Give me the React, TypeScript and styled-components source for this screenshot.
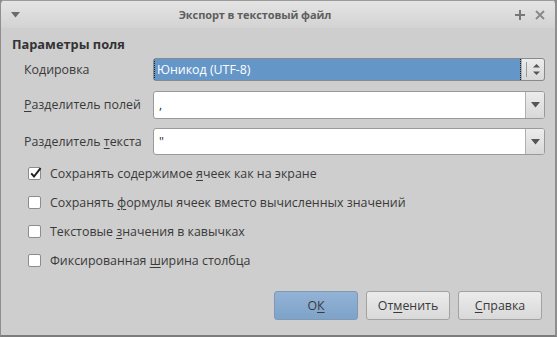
import React from 'react';
import styled, { createGlobalStyle, css } from 'styled-components';

const GlobalStyle = createGlobalStyle`
  html, body {
    margin: 0;
    padding: 0;
    background: #8c8c8c;
  }
  body {
    font-family: "Open Sans", "Noto Sans", sans-serif;
    font-size: 12.4px;
    color: #3a3a3a;
  }
`;

const Window = styled.div`
  width: 557px;
  height: 337px;
  box-sizing: border-box;
  border-left: 1px solid #8e8e8e;
  border-right: 2px solid #8e8e8e;
  border-bottom: 2px solid #7c7c7c;
  border-radius: 5px 5px 0 0;
  background: #cecece;
  display: flex;
  flex-direction: column;
  overflow: hidden;
`;

const TitleBar = styled.div`
  height: 28px;
  flex: none;
  display: grid;
  grid-template-columns: 28px 1fr 40px;
  align-items: center;
  background: linear-gradient(#e4e4e4, #d3d3d3);
  border-top: 1px solid #9a9a9a;
  box-sizing: border-box;
`;

const Title = styled.div`
  font-weight: 700;
  font-size: 11px;
  letter-spacing: -0.1px;
  color: #5e5e5e;
  text-align: center;
  padding-right: 34px;
`;

const TitleIcons = styled.div`
  display: flex;
  gap: 10px;
  align-items: center;
  justify-content: flex-start;
`;

const IconBox = styled.span`
  display: flex;
  align-items: center;
  justify-content: center;
`;

const Body = styled.div`
  flex: 1;
  display: flex;
  flex-direction: column;
  padding: 7px 13px 0 11px;
`;

const SectionTitle = styled.div`
  font-weight: 700;
  font-size: 12.8px;
  line-height: 18px;
  color: #333;
`;

const Form = styled.div`
  display: grid;
  grid-template-columns: 129px 392px;
  grid-template-rows: 23px 28px 27px;
  row-gap: 9.5px;
  margin: 5px 0 0 12px;
  align-items: center;
`;

const Label = styled.div`
  font-size: 12.4px;
  color: #3a3a3a;
`;

const Mn = styled.span`
  text-decoration: underline;
  text-underline-offset: 2px;
`;

const Field = styled.div<{ $selected?: boolean }>`
  height: 100%;
  box-sizing: border-box;
  border: 1px solid #9a9a9a;
  border-radius: 3px;
  background: #fff;
  display: flex;
  overflow: hidden;
  ${({ $selected }) =>
    $selected &&
    css`
      background: #6596c8;
      border-color: #8a8a8a;
    `}
`;

const FieldText = styled.div<{ $selected?: boolean }>`
  flex: 1;
  display: flex;
  align-items: center;
  padding-left: 5px;
  font-size: 12.4px;
  color: #333;
  ${({ $selected }) =>
    $selected &&
    css`
      color: #fff;
      padding-left: 2px;
      border-left: 1px dotted #222;
      border-right: 1px dotted #222;
    `}
`;

const SideButton = styled.div<{ $w: number }>`
  width: ${({ $w }) => $w}px;
  flex: none;
  display: flex;
  align-items: center;
  justify-content: center;
  background: linear-gradient(#ececec, #d8d8d8);
  border-left: 1px solid #b0b0b0;
  box-sizing: border-box;
`;

const Spin = styled.div`
  display: flex;
  align-items: center;
  gap: 6px;
  height: 100%;
`;

const SpinSep = styled.div`
  width: 1px;
  height: 15px;
  background: #9a9a9a;
`;

const Checks = styled.div`
  display: flex;
  flex-direction: column;
  gap: 10px;
  margin: 9px 0 0 16px;
`;

const CheckRow = styled.div`
  display: flex;
  align-items: center;
  gap: 9px;
  height: 19px;
`;

const Box = styled.div`
  width: 13px;
  height: 13px;
  box-sizing: border-box;
  border: 1px solid #8c8c8c;
  border-radius: 2px;
  background: #fff;
  position: relative;
`;

const Tick = styled.svg`
  position: absolute;
  left: 0px;
  top: -2px;
`;

const Buttons = styled.div`
  display: flex;
  justify-content: flex-end;
  gap: 8px;
  margin-top: 21px;
`;

const Button = styled.div<{ $primary?: boolean }>`
  width: 84px;
  height: 29px;
  box-sizing: border-box;
  border: 1px solid #a2a2a2;
  border-radius: 3px;
  display: flex;
  align-items: center;
  justify-content: center;
  font-size: 12.4px;
  color: #3a3a3a;
  background: linear-gradient(#ebebeb, #d9d9d9);
  ${({ $primary }) =>
    $primary &&
    css`
      border-color: #7f98b4;
      background: linear-gradient(#93b3d6, #7ea2c8);
    `}
`;

const Down = ({ color = '#555' }: { color?: string }) => (
  <svg width="9" height="6" viewBox="0 0 9 6">
    <path d="M0 0h9L4.5 5.5z" fill={color} />
  </svg>
);

const Check = ({ checked, children }: { checked?: boolean; children: React.ReactNode }) => (
  <CheckRow>
    <Box>
      {checked && (
        <Tick width="14" height="14" viewBox="0 0 14 14">
          <path d="M2.2 7.4l2.8 3.1L11.6 2.2" fill="none" stroke="#222" strokeWidth="2" />
        </Tick>
      )}
    </Box>
    <Label>{children}</Label>
  </CheckRow>
);

export default function App() {
  return (
    <>
      <GlobalStyle />
      <Window>
        <TitleBar>
          <IconBox>
            <Down color="#6a6a6a" />
          </IconBox>
          <Title>Экспорт в текстовый файл</Title>
          <TitleIcons>
            <svg width="10" height="10" viewBox="0 0 10 10">
              <path d="M5 0v10M0 5h10" stroke="#777" strokeWidth="2" />
            </svg>
            <svg width="10" height="10" viewBox="0 0 10 10">
              <path d="M1 1l8 8M9 1l-8 8" stroke="#888" strokeWidth="1.8" />
            </svg>
          </TitleIcons>
        </TitleBar>
        <Body>
          <SectionTitle>Параметры поля</SectionTitle>
          <Form>
            <Label>Кодировка</Label>
            <Field $selected>
              <FieldText $selected>Юникод (UTF-8)</FieldText>
              <SideButton $w={23}>
                <Spin>
                  <SpinSep />
                  <svg width="7" height="13" viewBox="0 0 7 13">
                    <path d="M0 4.5h7L3.5 1z M0 8.5h7L3.5 12z" fill="#555" />
                  </svg>
                </Spin>
              </SideButton>
            </Field>
            <Label>
              <Mn>Р</Mn>азделитель полей
            </Label>
            <Field>
              <FieldText>,</FieldText>
              <SideButton $w={19}>
                <Down />
              </SideButton>
            </Field>
            <Label>
              Разделитель <Mn>т</Mn>екста
            </Label>
            <Field>
              <FieldText>"</FieldText>
              <SideButton $w={19}>
                <Down />
              </SideButton>
            </Field>
          </Form>
          <Checks>
            <Check checked>
              Сохранять содержимое <Mn>я</Mn>чеек как на экране
            </Check>
            <Check>
              Сохранять <Mn>ф</Mn>ормулы ячеек вместо вычисленных значений
            </Check>
            <Check>
              Текстовые <Mn>з</Mn>начения в кавычках
            </Check>
            <Check>
              Фиксированная <Mn>ш</Mn>ирина столбца
            </Check>
          </Checks>
          <Buttons>
            <Button $primary>
              О<Mn>К</Mn>
            </Button>
            <Button>
              От<Mn>м</Mn>енить
            </Button>
            <Button>
              <Mn>С</Mn>правка
            </Button>
          </Buttons>
        </Body>
      </Window>
    </>
  );
}
